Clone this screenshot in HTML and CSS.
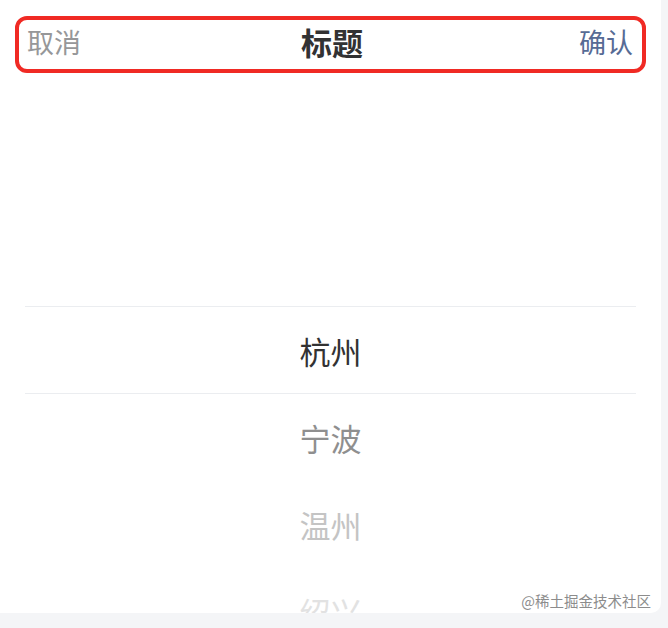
FILE: index.html
```html
<!DOCTYPE html>
<html lang="zh">
<head>
<meta charset="utf-8">
<link rel="stylesheet" href="styles.css">
</head>
<body>
<div class="panel">
  <div class="toolbar">
    <span class="btn cancel">取消</span>
    <span class="title">标题</span>
    <span class="btn confirm">确认</span>
  </div>
  <div class="picker">
    <div class="spacer"></div>
    <div class="item selected">杭州</div>
    <div class="item i1">宁波</div>
    <div class="item i2">温州</div>
    <div class="item i3">绍兴</div>
  </div>
  <div class="watermark">@稀土掘金技术社区</div>
</div>
</body>
</html>
```
FILE: styles.css
```css
html, body {
  margin: 0;
  padding: 0;
}
body {
  background: #f4f5f7;
  width: 668px;
  height: 628px;
  overflow: hidden;
  font-family: "Noto Sans CJK SC", "Noto Sans", sans-serif;
}
.panel {
  position: relative;
  width: 661px;
  height: 613px;
  background: #ffffff;
  border-bottom-right-radius: 10px;
  overflow: hidden;
}
.toolbar {
  margin: 16px 15px 0 15px;
  height: 43px;
  border: 4px solid #f02a24;
  border-radius: 12px;
  display: flex;
  align-items: center;
  justify-content: space-between;
  padding: 0 9px 6px 8px;
  box-sizing: content-box;
}
.btn {
  font-size: 27px;
  line-height: 1;
}
.cancel {
  color: #969799;
}
.confirm {
  color: #576b95;
}
.title {
  font-size: 31px;
  font-weight: 700;
  color: #323233;
  line-height: 1;
  margin-left: 4px;
}
.picker {
  display: flex;
  flex-direction: column;
}
.spacer {
  height: 233px;
  flex: none;
}
.item {
  flex: none;
  height: 87px;
  display: flex;
  align-items: center;
  justify-content: center;
  font-size: 31px;
  color: #323233;
}
.selected {
  height: 86px;
  margin: 0 25px;
  border-top: 1px solid #ebedf0;
  border-bottom: 1px solid #ebedf0;
}
.i1 { color: #8f8f8f; }
.i2 { color: #c4c4c4; }
.i3 { color: #e2e2e2; }
.watermark {
  position: absolute;
  right: 10px;
  bottom: 2px;
  font-size: 14.5px;
  color: #8c8c8c;
  line-height: 20px;
}
```
